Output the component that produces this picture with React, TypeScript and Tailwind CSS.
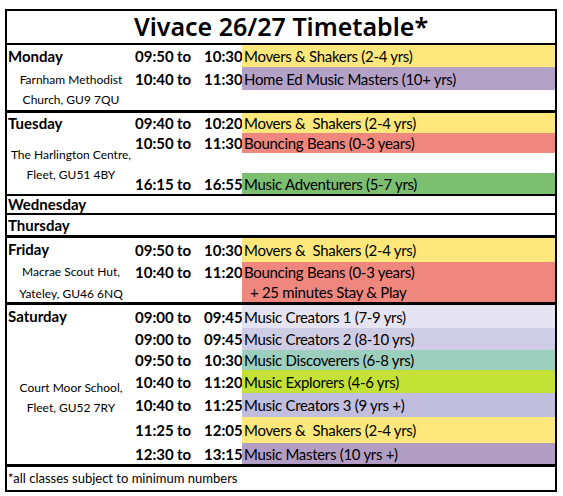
import React from "react";

type Row = { start?: string; end?: string; label?: string; label2?: string; color?: string; h: number };
type Sec = { day: string; loc?: string[]; rows: Row[]; h: number; locLead?: number; locTop?: number };

const Y = "bg-[#fee87c]";

const sections: Sec[] = [
  {
    day: "Monday",
    loc: ["Farnham Methodist", "Church, GU9 7QU"],
    h: 65,
    rows: [
      { start: "09:50", end: "10:30", label: "Movers & Shakers (2-4 yrs)", color: Y, h: 22 },
      { start: "10:40", end: "11:30", label: "Home Ed Music Masters (10+ yrs)", color: "bg-[#b3a1c8]", h: 23 },
    ],
  },
  {
    day: "Tuesday",
    loc: ["The Harlington Centre,", "Fleet, GU51 4BY"],
    h: 81,
    rows: [
      { start: "09:40", end: "10:20", label: "Movers &  Shakers (2-4 yrs)", color: Y, h: 20 },
      { start: "10:50", end: "11:30", label: "Bouncing Beans (0-3 years)", color: "bg-[#f0877e]", h: 20 },
      { h: 20 },
      { start: "16:15", end: "16:55", label: "Music Adventurers (5-7 yrs)", color: "bg-[#7dbf71]", h: 21 },
    ],
  },
];

const friday: Sec = {
  day: "Friday",
  loc: ["Macrae Scout Hut,", "Yateley, GU46 6NQ"],
  h: 64,
  locLead: 22,
  locTop: 0,
  rows: [
    { start: "09:50", end: "10:30", label: "Movers &  Shakers (2-4 yrs)", color: Y, h: 24 },
    {
      start: "10:40",
      end: "11:20",
      label: "Bouncing Beans (0-3 years)",
      label2: "+ 25 minutes Stay & Play",
      color: "bg-[#f0877e]",
      h: 40,
    },
  ],
};

const saturday: Sec = {
  day: "Saturday",
  loc: ["Court Moor School,", "Fleet, GU52 7RY"],
  h: 159,
  rows: [
    { start: "09:00", end: "09:45", label: "Music Creators 1 (7-9 yrs)", color: "bg-[#e6e4f2]", h: 23 },
    { start: "09:00", end: "09:45", label: "Music Creators 2 (8-10 yrs)", color: "bg-[#cfcce5]", h: 22 },
    { start: "09:50", end: "10:30", label: "Music Discoverers (6-8 yrs)", color: "bg-[#9dcfbf]", h: 20 },
    { start: "10:40", end: "11:20", label: "Music Explorers (4-6 yrs)", color: "bg-[#c4e235]", h: 23 },
    { start: "10:40", end: "11:25", label: "Music Creators 3 (9 yrs +)", color: "bg-[#c1bddd]", h: 24 },
    { start: "11:25", end: "12:05", label: "Movers &  Shakers (2-4 yrs)", color: Y, h: 26 },
    { start: "12:30", end: "13:15", label: "Music Masters (10 yrs +)", color: "bg-[#b29ec5]", h: 21 },
  ],
};

function Section({ s }: { s: Sec }) {
  const firstH = s.rows[0]?.h ?? 20;
  return (
    <div className="flex" style={{ height: s.h }}>
      <div className="w-[128px] flex flex-col shrink-0">
        <div className="flex items-center pl-[1px] font-bold text-[15px]" style={{ height: firstH }}>
          {s.day}
        </div>
        {s.loc && (
          <div
            className="flex-1 flex flex-col items-center justify-center text-[12px]"
            style={{ paddingTop: s.locTop ?? 3 }}
          >
            {s.loc.map((l) => (
              <div key={l} style={{ lineHeight: `${s.locLead ?? 20}px` }}>
                {l}
              </div>
            ))}
          </div>
        )}
      </div>
      <div className="flex-1 flex flex-col">
        {s.rows.map((r, i) => (
          <div key={i} className="flex" style={{ height: r.h }}>
            <div
              className={`w-[107px] flex font-bold text-[15px] shrink-0 leading-[20px] ${
                r.label2 ? "items-start" : "items-center"
              }`}
            >
              {r.start && (
                <>
                  <span className="w-[42px]">{r.start}</span>
                  <span className="w-[27px]">to</span>
                  <span className="w-[38px] text-right pr-[1px]">{r.end}</span>
                </>
              )}
            </div>
            <div
              className={`flex-1 flex flex-col justify-center pl-[2px] text-[15px] tracking-[-0.3px] ${r.color ?? ""}`}
            >
              <div className="whitespace-pre leading-[20px]">{r.label}</div>
              {r.label2 && <div className="whitespace-pre leading-[20px] pl-[6px]">{r.label2}</div>}
            </div>
          </div>
        ))}
      </div>
    </div>
  );
}

export default function App() {
  return (
    <div
      className="bg-white w-[563px] h-[496px] pt-[9px] pl-[5px] text-black"
      style={{ fontFamily: "Lato, 'Open Sans', sans-serif" }}
    >
      <div className="w-[552px] border-2 border-black flex flex-col">
        <div
          className="h-[34px] flex items-center justify-center text-[25px] font-semibold border-b-2 border-black"
          style={{ fontFamily: "'Noto Sans', sans-serif" }}
        >
          Vivace 26/27 Timetable*
        </div>
        <div className="border-b-[3px] border-black">
          <Section s={sections[0]} />
        </div>
        <div className="border-b-2 border-black">
          <Section s={sections[1]} />
        </div>
        <div className="h-[19px] flex items-center pl-[1px] font-bold text-[15px] border-b-2 border-black">
          Wednesday
        </div>
        <div className="h-[23px] flex items-center pl-[1px] font-bold text-[15px] border-b-[3px] border-black">
          Thursday
        </div>
        <div className="border-b-[3px] border-black">
          <Section s={friday} />
        </div>
        <div className="border-b-[3px] border-black">
          <Section s={saturday} />
        </div>
        <div className="h-[23px] flex items-center pl-[1px] text-[13px]">*all classes subject to minimum numbers</div>
      </div>
    </div>
  );
}
